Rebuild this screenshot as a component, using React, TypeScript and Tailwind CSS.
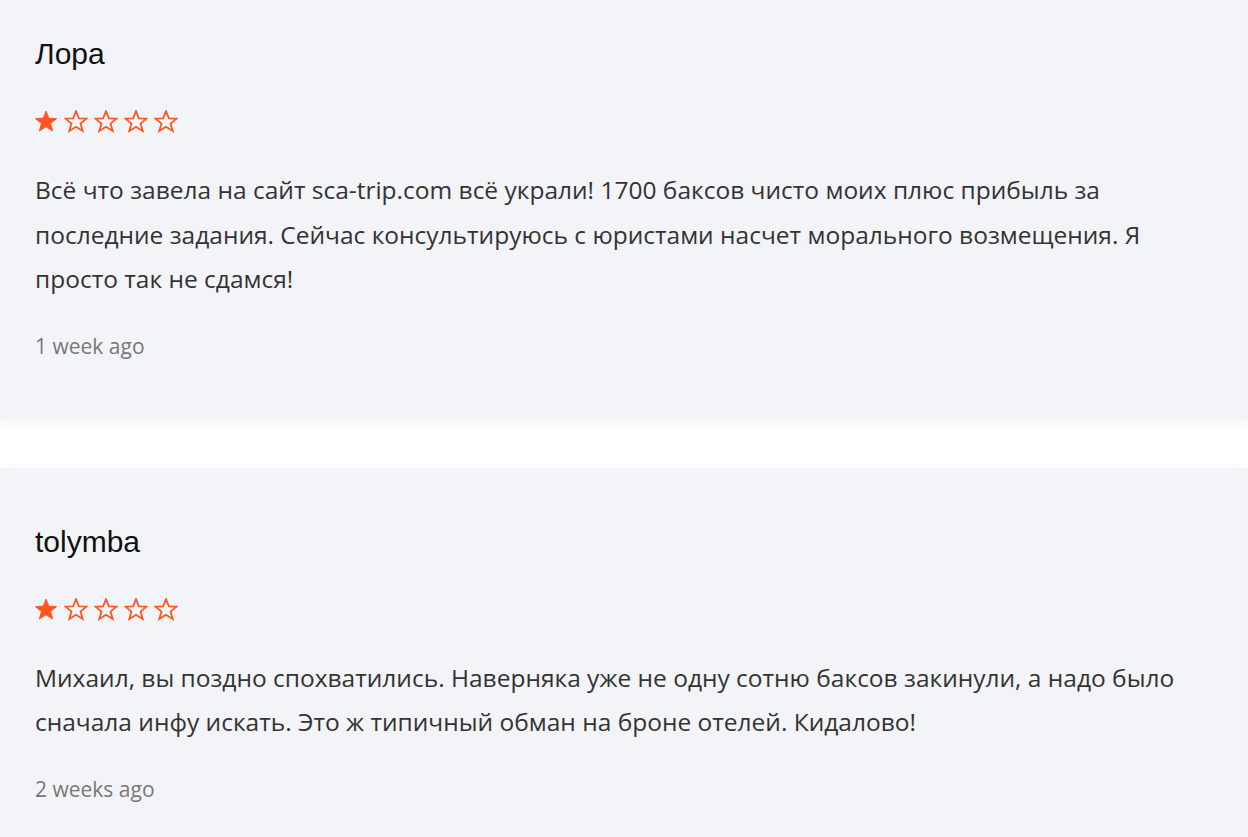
import React from 'react';

type Review = {
  name: string;
  rating: number;
  text: string;
  time: string;
};

const reviews: Review[] = [
  {
    name: 'Лора',
    rating: 1,
    text: 'Всё что завела на сайт sca-trip.com всё украли! 1700 баксов чисто моих плюс прибыль за последние задания. Сейчас консультируюсь с юристами насчет морального возмещения. Я просто так не сдамся!',
    time: '1 week ago',
  },
  {
    name: 'tolymba',
    rating: 1,
    text: 'Михаил, вы поздно спохватились. Наверняка уже не одну сотню баксов закинули, а надо было сначала инфу искать. Это ж типичный обман на броне отелей. Кидалово!',
    time: '2 weeks ago',
  },
];

const Star: React.FC<{ filled: boolean }> = ({ filled }) => (
  <svg width="24" height="23" viewBox="0 0 24 23" className="block">
    <polygon
      points="12,1.2 14.9,8.3 22.6,8.6 16.6,13.5 18.7,21 12,16.8 5.3,21 7.4,13.5 1.4,8.6 9.1,8.3"
      fill={filled ? '#ff5722' : 'none'}
      stroke="#ff5722"
      strokeWidth={filled ? 1 : 1.8}
      strokeLinejoin="miter"
    />
  </svg>
);

const ReviewCard: React.FC<{ review: Review }> = ({ review }) => (
  <div className="bg-[#f3f4f8] pl-[35px] pr-[60px] pt-[57px] pb-[57px] shadow-[0_4px_14px_rgba(0,0,0,0.06)] relative">
    <div className="text-[30px] leading-[34px] text-[#111] font-['Liberation_Sans',Arial,sans-serif]">
      {review.name}
    </div>
    <div className="flex gap-[6px] mt-[39px] -ml-[1px]">
      {[1, 2, 3, 4, 5].map((i) => (
        <Star key={i} filled={i <= review.rating} />
      ))}
    </div>
    <p className="mt-[35px] text-[24.5px] leading-[44.5px] text-[#333] font-['Open_Sans',sans-serif]">
      {review.text}
    </p>
    <div className="mt-[29px] text-[21px] leading-[30px] text-[#777] font-['Open_Sans',sans-serif]">
      {review.time}
    </div>
  </div>
);

const App: React.FC = () => {
  return (
    <div className="min-h-screen bg-white overflow-hidden">
      <div className="-mt-[20px] flex flex-col gap-[50px]">
        {reviews.map((r) => (
          <ReviewCard key={r.name} review={r} />
        ))}
      </div>
    </div>
  );
};

export default App;
